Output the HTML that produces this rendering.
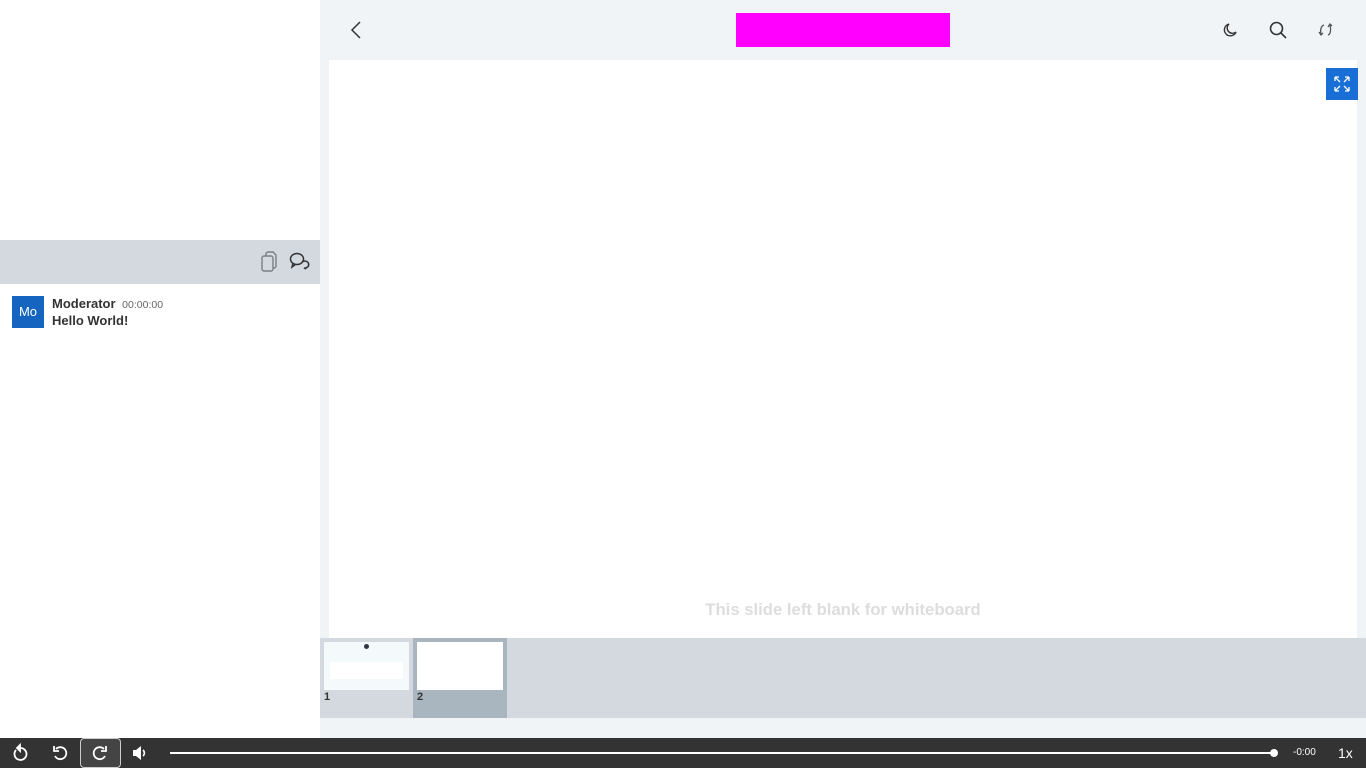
<!DOCTYPE html>
<html><head><meta charset="utf-8"><style>
*{margin:0;padding:0;box-sizing:border-box}
body{width:1366px;height:768px;overflow:hidden;background:#fff;font-family:"Liberation Sans",sans-serif;position:relative}
.abs{position:absolute}
</style></head><body>
<div class="abs" style="left:0;top:240px;width:320px;height:44px;background:#d4d8df"></div>
<svg class="abs" style="left:259px;top:250px" width="20" height="24" viewBox="0 0 20 24" fill="none" stroke="#7a7f86" stroke-width="1.4"><rect x="3" y="6" width="11" height="15" rx="2"/><path d="M7 6V4a2 2 0 0 1 2-2h5l3 3v11a2 2 0 0 1-2 2h-1"/></svg>
<svg class="abs" style="left:289px;top:251px" width="22" height="20" viewBox="0 0 22 20" fill="none" stroke="#333" stroke-width="1.5"><ellipse cx="8" cy="8" rx="6.5" ry="5.5"/><path d="M4 12l-1 4 4-3"/><path d="M13 11a4 3.5 0 1 1 2 6l2 1"/></svg>
<div class="abs" style="left:12px;top:296px;width:32px;height:32px;background:#1565c0;color:#fff;font-size:13px;line-height:32px;text-align:center">Mo</div>
<div class="abs" style="left:52px;top:296px;font-size:13px;font-weight:bold;color:#333">Moderator <span style="font-weight:normal;font-size:10.5px;color:#666;margin-left:3px">00:00:00</span></div>
<div class="abs" style="left:52px;top:313px;font-size:13px;font-weight:bold;color:#333">Hello World!</div>

<div class="abs" style="left:320px;top:0;width:1046px;height:738px;background:#f1f4f7"></div>
<svg class="abs" style="left:348px;top:20px" width="16" height="20" viewBox="0 0 16 20" fill="none" stroke="#333" stroke-width="1.5"><path d="M12 2L4 10l8 8"/></svg>
<div class="abs" style="left:736px;top:13px;width:214px;height:34px;background:#ff00ff"></div>
<svg class="abs" style="left:1221px;top:21px" width="18" height="18" viewBox="0 0 18 18" fill="none" stroke="#333" stroke-width="1.4"><path d="M8 3a6 6 0 1 0 7 8A5 5 0 0 1 8 3z"/></svg>
<svg class="abs" style="left:1268px;top:20px" width="20" height="20" viewBox="0 0 20 20" fill="none" stroke="#333" stroke-width="1.6"><circle cx="8.5" cy="8.5" r="6"/><path d="M13 13l5 5"/></svg>
<svg class="abs" style="left:1316px;top:20px" width="20" height="20" viewBox="0 0 20 20" fill="none" stroke="#555" stroke-width="1.3"><path d="M8 5c-3 1-4 5-3 9"/><path d="M3 12l2 3 2-2"/><path d="M12 15c3-1 3-6 2-10"/><path d="M12 7l2-3 2 2"/></svg>
<div class="abs" style="left:329px;top:60px;width:1028px;height:578px;background:#fff"></div>
<div class="abs" style="left:1326px;top:68px;width:32px;height:32px;background:#1a6fd6"></div>
<svg class="abs" style="left:1326px;top:68px" width="32" height="32" viewBox="0 0 32 32" fill="none" stroke="#fff" stroke-width="1.3"><path d="M9 9l5 5M9 9v4M9 9h4M23 9l-5 5M23 9v4M23 9h-4M9 23l5-5M9 23v-4M9 23h4M23 23l-5-5M23 23v-4M23 23h-4"/></svg>
<div class="abs" style="left:329px;top:600px;width:1028px;text-align:center;font-size:16.7px;font-weight:bold;color:#ddd">This slide left blank for whiteboard</div>
<div class="abs" style="left:320px;top:638px;width:1046px;height:80px;background:#d4d8df"></div>
<div class="abs" style="left:413px;top:638px;width:94px;height:80px;background:#a9b5bf"></div>
<div class="abs" style="left:324px;top:642px;width:85px;height:48px;background:#f4f9fc"></div>
<div class="abs" style="left:330px;top:662px;width:73px;height:17px;background:#fff"></div>
<div class="abs" style="left:364px;top:644px;width:5px;height:5px;border-radius:50%;background:#334"></div>
<div class="abs" style="left:417px;top:642px;width:86px;height:48px;background:#fff"></div>
<div class="abs" style="left:324px;top:691px;font-size:11px;font-weight:bold;color:#333">1</div>
<div class="abs" style="left:417px;top:691px;font-size:11px;font-weight:bold;color:#333">2</div>

<div class="abs" style="left:0;top:738px;width:1366px;height:30px;background:#333"></div>
<div class="abs" style="left:80px;top:738px;width:41px;height:30px;border:1px solid #ccc;border-radius:4px;background:#444"></div>
<svg class="abs" style="left:10px;top:743px" width="20" height="20" viewBox="0 0 20 20" fill="none" stroke="#fff" stroke-width="1.8"><path d="M6 7a6 6 0 1 0 4-2"/><path d="M10 2v6l-3-3z" fill="#fff"/></svg>
<svg class="abs" style="left:50px;top:743px" width="20" height="20" viewBox="0 0 20 20" fill="none" stroke="#fff" stroke-width="1.8"><path d="M6 6a6 6 0 1 1-1 7"/><path d="M4 3v5h5"/></svg>
<svg class="abs" style="left:90px;top:743px" width="20" height="20" viewBox="0 0 20 20" fill="none" stroke="#fff" stroke-width="1.8"><path d="M14 6a6 6 0 1 0 1 7"/><path d="M16 3v5h-5"/></svg>
<svg class="abs" style="left:131px;top:744px" width="18" height="18" viewBox="0 0 18 18"><path d="M2 6h3l5-4v14l-5-4H2z" fill="#fff"/><path d="M12 6a4 4 0 0 1 0 6" stroke="#fff" stroke-width="1.6" fill="none"/></svg>
<div class="abs" style="left:170px;top:752px;width:1104px;height:2px;background:#fff"></div>
<div class="abs" style="left:1270px;top:749px;width:8px;height:8px;border-radius:50%;background:#fff"></div>
<div class="abs" style="left:1293px;top:747px;font-size:10px;color:#fff">-0:00</div>
<div class="abs" style="left:1338px;top:745px;font-size:14px;color:#fff">1x</div>
</body></html>
